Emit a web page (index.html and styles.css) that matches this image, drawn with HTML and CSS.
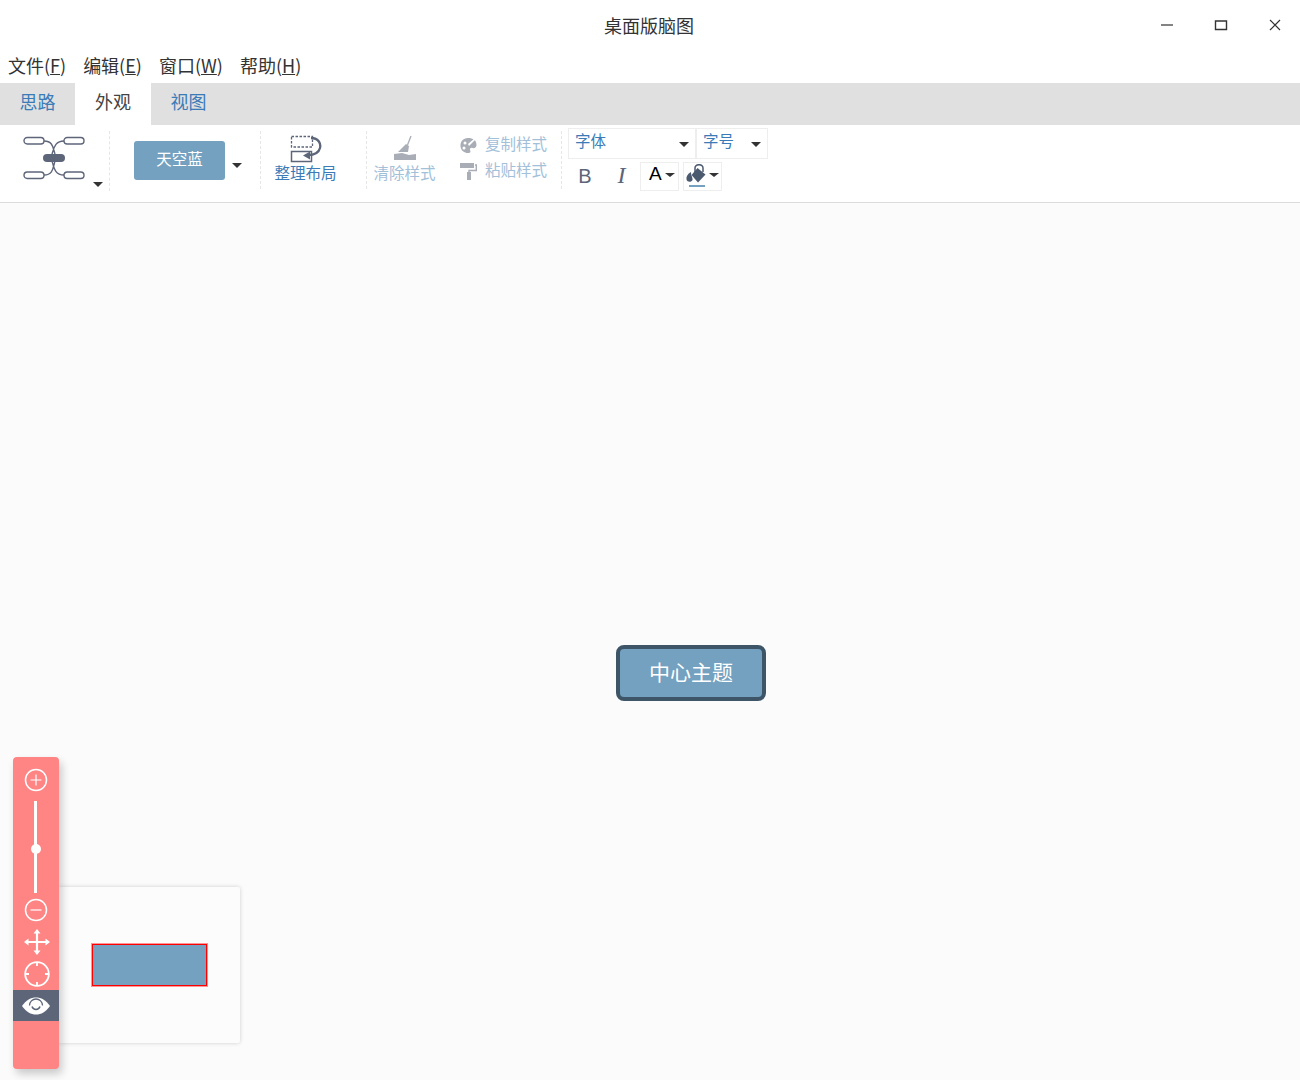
FILE: index.html
```html
<!DOCTYPE html>
<html lang="zh-CN">
<head>
    <meta charset="UTF-8">
    <title>桌面版脑图</title>
    <link rel="stylesheet" href="styles.css">
</head>
<body>

    <div class="titlebar">
        <span class="title">桌面版脑图</span>
        <div class="win-btns">
            <svg width="14" height="14" viewBox="0 0 14 14"><path d="M1 7h12" stroke="#333" stroke-width="1.2"/></svg>
            <svg width="14" height="14" viewBox="0 0 14 14"><path d="M1.5 3h11v8.5h-11z" fill="none" stroke="#333" stroke-width="1.4"/></svg>
            <svg width="14" height="14" viewBox="0 0 14 14"><path d="M2 2l10 10M12 2L2 12" stroke="#333" stroke-width="1.2"/></svg>
        </div>
    </div>

    <div class="menubar">
        <span class="menu-item">文件(<u>F</u>)</span>
        <span class="menu-item">编辑(<u>E</u>)</span>
        <span class="menu-item">窗口(<u>W</u>)</span>
        <span class="menu-item">帮助(<u>H</u>)</span>
    </div>

    <div class="tabs">
        <div class="tab">思路</div>
        <div class="tab active">外观</div>
        <div class="tab">视图</div>
    </div>

    <div class="toolbar">
        <div class="group group-layout">
            <svg width="62" height="44" viewBox="0 0 62 44">
                <g fill="none" stroke="#5d6579" stroke-width="1.4">
                    <rect x="1" y="1.5" width="20" height="6.5" rx="3.2"/>
                    <rect x="41" y="1.5" width="20" height="6.5" rx="3.2"/>
                    <rect x="1" y="36" width="20" height="6.5" rx="3.2"/>
                    <rect x="41" y="36" width="20" height="6.5" rx="3.2"/>
                    <path d="M21 5c9 0 9 7 11 13M41 5c-9 0-10 7-12 13M21 39c9 0 9-7 11-14M41 39c-9 0-10-7-12-14"/>
                </g>
                <rect x="20" y="18" width="22" height="8" rx="4" fill="#5d6579"/>
            </svg>
            <i class="caret caret-layout"></i>
        </div>

        <div class="group group-theme">
            <div class="theme-btn">天空蓝</div>
            <i class="caret"></i>
        </div>

        <div class="group group-arrange">
            <svg width="32" height="28" viewBox="0 0 32 28">
                <rect x="1.5" y="1.5" width="21" height="10.5" fill="none" stroke="#5d6579" stroke-width="1.3" stroke-dasharray="2.5 1.5"/>
                <rect x="1.5" y="16.5" width="20" height="10" fill="none" stroke="#5d6579" stroke-width="1.5"/>
                <path d="M21 3c8 0 10 6 9 10-1 4-5 7-12 7" fill="none" stroke="#5d6579" stroke-width="2.3"/>
                <path d="M13 20.5l7-4v8z" fill="#5d6579"/>
            </svg>
            <span class="label">整理布局</span>
        </div>

        <div class="group group-clear">
            <svg width="24" height="26" viewBox="0 0 24 26">
                <path d="M5 17l8-8 3 2-1 6z" fill="#a9adb6"/>
                <path d="M14.5 10L18 1" stroke="#a9adb6" stroke-width="1.3"/>
                <path d="M1 19l8-1 7 2 7-1v6H1z" fill="#a9adb6"/>
            </svg>
            <span class="label">清除样式</span>
        </div>

        <div class="group group-style">
            <div class="style-row">
                <svg width="17" height="17" viewBox="0 0 17 17">
                    <path d="M8 1C3 1 0 5 .5 9.500 1 14 5 16.500 9 16c2-.3 1.500-2 1-3-.5-1.500 1-2.500 2.500-2 2 .5 4-.5 4-3C16.500 3 13 1 8 1z" fill="#a9adb6"/>
                    <circle cx="5" cy="6" r="1.5" fill="#fff"/>
                    <circle cx="4" cy="11" r="1.5" fill="#fff"/>
                    <path d="M9 9l7-7-1-1-7 6z" fill="#fff"/>
                </svg>
                <span class="label">复制样式</span>
            </div>
            <div class="style-row">
                <svg width="17" height="18" viewBox="0 0 17 18">
                    <path d="M0 1h14v5H0z" fill="#a9adb6"/>
                    <path d="M15 3h1.300v5.500H9V11" fill="none" stroke="#a9adb6" stroke-width="1.4"/>
                    <path d="M7 10h4v8H7z" fill="#a9adb6"/>
                </svg>
                <span class="label">粘贴样式</span>
            </div>
        </div>

        <div class="group group-font">
            <div class="font-row">
                <div class="select select-family">字体<i class="caret"></i></div>
                <div class="select select-size">字号<i class="caret"></i></div>
            </div>
            <div class="font-row font-row-btns">
                <span class="fmt fmt-bold">B</span>
                <span class="fmt fmt-italic">I</span>
                <div class="color-btn"><span class="color-a">A</span><i class="caret caret-sm"></i></div>
                <div class="color-btn color-bg">
                    <span class="bucket">
                        <svg width="20" height="19" viewBox="0 0 20 19">
                            <path d="M11.5 4L19.500 10.500 12 18.500 5.500 11z" fill="#4c5a70"/>
                            <path d="M9 8V4a4 3.300 0 0 1 8 0v4" fill="none" stroke="#4c5a70" stroke-width="1.5"/>
                            <path d="M5 8C1.500 10 0 12.500.5 15.500c.6 2.800 5 3 6 .5.6-1.800-1.500-4-1.500-8z" fill="#4c5a70"/>
                        </svg>
                        <span class="bucket-line"></span>
                    </span>
                    <i class="caret caret-sm"></i>
                </div>
            </div>
        </div>
    </div>

    <div class="canvas">
        <div class="main-node">中心主题</div>

        <div class="nav-preview">
            <div class="nav-thumb"></div>
        </div>

        <div class="nav-bar">
            <svg class="nav-icon nav-zoom-in" width="24" height="24" viewBox="0 0 24 24">
                <circle cx="12" cy="12" r="10.5" fill="none" stroke="#fff" stroke-width="1.5"/>
                <path d="M12 6.500v11M6.500 12h11" stroke="#fff" stroke-width="1.2"/>
            </svg>
            <div class="nav-slider"><span class="nav-knob"></span></div>
            <svg class="nav-icon nav-zoom-out" width="24" height="24" viewBox="0 0 24 24">
                <circle cx="12" cy="12" r="10.5" fill="none" stroke="#fff" stroke-width="1.5"/>
                <path d="M6.500 12h11" stroke="#fff" stroke-width="1.2"/>
            </svg>
            <svg class="nav-icon nav-move" width="26" height="26" viewBox="0 0 26 26">
                <path d="M13 3v20M3 13h20" stroke="#fff" stroke-width="2.2"/>
                <path d="M13 0l3.500 4.500h-7zM13 26l3.500-4.500h-7zM0 13l4.500-3.500v7zM26 13l-4.500-3.500v7z" fill="#fff"/>
            </svg>
            <svg class="nav-icon nav-locate" width="26" height="26" viewBox="0 0 26 26">
                <circle cx="13" cy="13" r="11.8" fill="none" stroke="#fff" stroke-width="1.8"/>
                <path d="M13 1v4M13 21v4M1 13h4M21 13h4" stroke="#fff" stroke-width="1.8"/>
            </svg>
            <div class="nav-eye">
                <svg width="28" height="20" viewBox="0 0 28 20">
                    <path d="M0 10C4 4 9 1.500 14 1.500S24 4 28 10c-4 6-9 8.500-14 8.500S4 16 0 10z" fill="#fff"/>
                    <path d="M7.500 9.500a6.500 6.500 0 0 1 13 0" fill="none" stroke="#5d6579" stroke-width="1.3"/>
                    <path d="M10 10.500a4.200 4.200 0 0 0 8 0" fill="none" stroke="#5d6579" stroke-width="1.5"/>
                </svg>
            </div>
        </div>
    </div>

</body>
</html>
```

FILE: styles.css
```css
* {
    margin: 0;
    padding: 0;
    box-sizing: border-box;
}
body {
    width: 1300px;
    height: 1080px;
    overflow: hidden;
    display: flex;
    flex-direction: column;
    background: #fff;
    font-family: "Noto Sans CJK SC", "Noto Sans", sans-serif;
    color: #333;
}

.titlebar {
    height: 50px;
    flex: none;
    position: relative;
    display: flex;
    align-items: center;
    justify-content: center;
    padding: 0 2px 0 0;
}
.title {
    font-size: 18px;
    color: #333;
}
.win-btns {
    position: absolute;
    top: 18px;
    right: 18px;
    display: flex;
    gap: 40px;
}

.menubar {
    height: 33px;
    flex: none;
    display: flex;
    gap: 17px;
    padding-left: 8px;
    font-size: 18px;
    line-height: 30px;
    color: #333;
}

.tabs {
    height: 42px;
    flex: none;
    display: flex;
    background: #e0e0e0;
}
.tab {
    width: 75px;
    text-align: center;
    font-size: 18px;
    line-height: 36px;
    color: #3b7cb8;
}
.tab.active {
    width: 76px;
    background: #fff;
    color: #444;
}

.toolbar {
    height: 78px;
    flex: none;
    display: flex;
    border-bottom: 1px solid #dcdcdc;
    background: #fff;
}
.group {
    position: relative;
    flex: none;
}
.group-layout {
    width: 110px;
    height: 60px;
    margin-top: 6px;
    padding: 5px 0 0 23px;
    border-right: 1px dashed #e6e6e6;
}
.group-theme {
    width: 151px;
    height: 58px;
    margin-top: 6px;
    padding: 10px 0 0 24px;
    border-right: 1px dashed #e6e6e6;
    display: flex;
    align-items: flex-start;
}
.theme-btn {
    width: 91px;
    height: 39px;
    border-radius: 3px;
    background: #73a1bf;
    color: #fff;
    font-size: 15.5px;
    line-height: 35px;
    text-align: center;
}
.group-theme .caret {
    margin: 22px 0 0 6px;
}
.group-arrange {
    width: 106px;
    height: 58px;
    margin-top: 6px;
    padding: 4px 16px 0 0;
    border-right: 1px dashed #e6e6e6;
    display: flex;
    flex-direction: column;
    align-items: center;
}
.group-clear {
    width: 75px;
    height: 58px;
    margin-top: 6px;
    padding-top: 4px;
    display: flex;
    flex-direction: column;
    align-items: center;
}
.group-clear svg {
    flex: none;
}
.group-clear .label {
    color: #a3c0d9;
}
.label {
    font-size: 15.5px;
    line-height: 22px;
    color: #3b7cb8;
    white-space: nowrap;
}
.group-arrange .label {
    margin-top: -2px;
}
.group-style {
    width: 120px;
    height: 58px;
    margin-top: 6px;
    border-right: 1px dashed #e6e6e6;
    padding: 1px 0 0 18px;
    display: flex;
    flex-direction: column;
    gap: 4px;
}
.style-row {
    display: flex;
    align-items: center;
    gap: 8px;
}
.style-row svg {
    margin-top: 4px;
}
.style-row .label {
    color: #a3c0d9;
}

.group-font {
    margin-left: 6px;
    margin-top: 3px;
}
.font-row {
    display: flex;
}
.font-row-btns {
    align-items: flex-start;
    margin-top: 3px;
}
.select {
    height: 31px;
    border: 1px solid #eee;
    font-size: 15.5px;
    line-height: 22px;
    padding-left: 6px;
    color: #3b7cb8;
    position: relative;
}
.select-family {
    width: 128px;
}
.select-size {
    width: 72px;
}
.select .caret {
    position: absolute;
    top: 13px;
    right: 6px;
}

.caret {
    display: inline-block;
    width: 0;
    height: 0;
    border-left: 5.5px solid transparent;
    border-right: 5.5px solid transparent;
    border-top: 5.5px solid #333;
    flex: none;
}
.caret-sm {
    border-left-width: 5px;
    border-right-width: 5px;
    border-top-width: 4px;
}
.caret-layout {
    position: absolute;
    top: 51px;
    left: 93px;
}
.group-theme .caret {
    margin-left: 7px;
}

.fmt {
    height: 31px;
    text-align: center;
    font-size: 20px;
    line-height: 29px;
    color: #5d6579;
}
.fmt-bold {
    width: 36px;
    margin-left: -1px;
    font-family: "Liberation Sans", sans-serif;
}
.fmt-italic {
    width: 37px;
    font-family: "Liberation Serif", serif;
    font-style: italic;
    font-size: 24px;
    line-height: 27px;
}
.color-btn {
    width: 39px;
    height: 29px;
    border: 1px solid #eee;
    display: flex;
    align-items: center;
    padding-left: 8px;
    gap: 3px;
    position: relative;
}
.color-a {
    font-family: "Liberation Sans", sans-serif;
    font-size: 19px;
    line-height: 22px;
    color: #000;
    margin-top: -5px;
}
.color-btn .caret-sm {
    margin-top: -3px;
}
.color-bg {
    margin-left: 4px;
    padding-left: 2px;
}
.bucket {
    display: block;
    width: 20px;
    height: 25px;
}
.bucket svg {
    display: block;
}
.bucket-line {
    display: block;
    height: 2px;
    margin: 2px 1px 0 3px;
    background: #73a1bf;
}

.canvas {
    flex: 1;
    position: relative;
    background: #fbfbfb;
}
.main-node {
    position: absolute;
    left: 616px;
    top: 442px;
    width: 150px;
    height: 56px;
    border: 4px solid #3e5568;
    border-radius: 8px;
    background: #73a1bf;
    color: #fff;
    font-size: 21px;
    line-height: 45px;
    text-align: center;
}

.nav-preview {
    position: absolute;
    left: 59px;
    top: 684px;
    width: 181px;
    height: 156px;
    background: #fcfcfc;
    border-radius: 0 2px 2px 0;
    box-shadow: 0 0 4px rgba(0, 0, 0, 0.18);
    padding: 57px 0 0 33px;
}
.nav-thumb {
    width: 115px;
    height: 42px;
    background: #73a1bf;
    border: 1px solid #f00;
    box-shadow: 0 0 0 1px rgba(255, 0, 0, 0.4);
}
.nav-bar {
    position: absolute;
    left: 13px;
    top: 554px;
    width: 46px;
    height: 312px;
    background: #ff8585;
    border-radius: 4px;
    box-shadow: 3px 5px 8px rgba(0, 0, 0, 0.2);
    display: flex;
    flex-direction: column;
    align-items: center;
    overflow: hidden;
}
.nav-icon {
    display: block;
    flex: none;
}
.nav-zoom-in {
    margin-top: 11px;
    margin-left: -1px;
}
.nav-slider {
    width: 3px;
    height: 92px;
    margin: 9px 0 5px -1px;
    background: #fff;
    position: relative;
    flex: none;
}
.nav-knob {
    position: absolute;
    left: -3.5px;
    top: 43px;
    width: 10px;
    height: 10px;
    border-radius: 50%;
    background: #fff;
}
.nav-zoom-out {
    margin-left: -1px;
}
.nav-move {
    margin-top: 7px;
    margin-left: 1px;
}
.nav-locate {
    margin-top: 6px;
    margin-left: 1px;
}
.nav-eye {
    width: 100%;
    height: 31px;
    margin-top: 3px;
    background: #5d6579;
    display: flex;
    align-items: center;
    justify-content: center;
    flex: none;
}
```
